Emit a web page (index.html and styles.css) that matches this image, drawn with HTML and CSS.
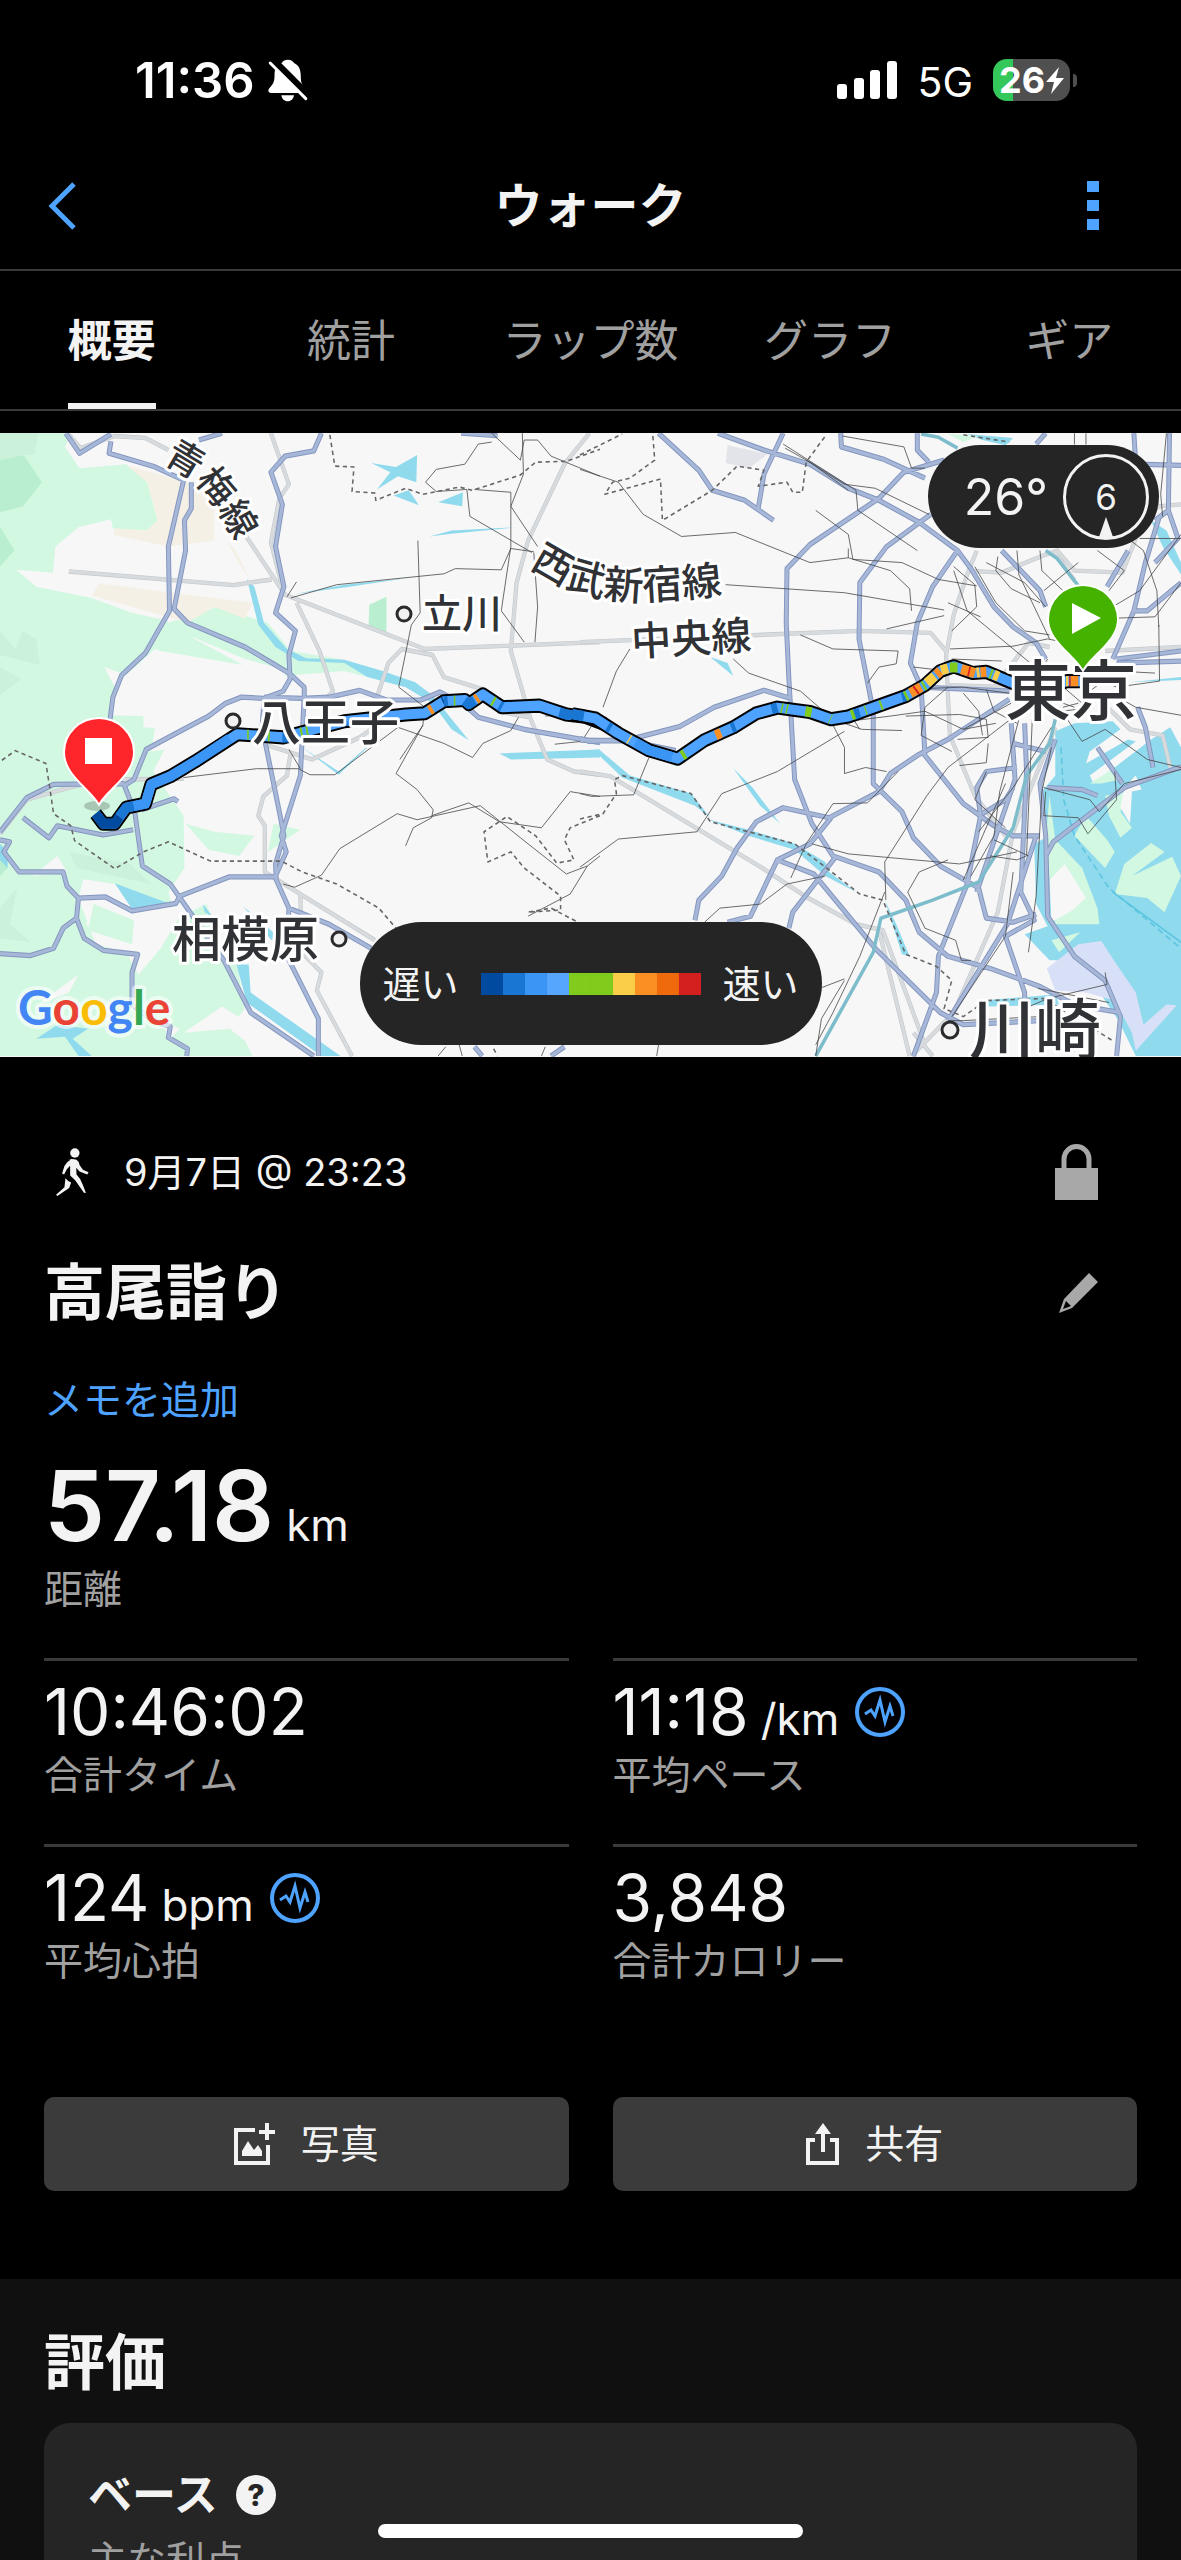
FILE: index.html
```
<!DOCTYPE html>
<html lang="ja">
<head>
  <meta charset="UTF-8">
  <meta name="viewport" content="width=device-width, initial-scale=1">
  <title>ウォーク</title>
  <link rel="stylesheet" href="styles.css">
</head>
<body>

  <div class="status-bar">
    <div class="status-left">
      <span class="clock">11:36</span>
      <svg class="bell" viewBox="443 58 118 128" aria-hidden="true">
        <path fill="#fff" d="M502 60c10 0 16 6 18 10 14 6 20 20 20 38 0 22 4 28 13 37 6 6 5 14-4 14H452c-9 0-11-9-5-15 12-12 15-20 15-40 0-20 8-30 22-35 3-6 9-9 18-9z"/>
        <path fill="#fff" d="M482 166h38c-2 11-9 18-19 18s-17-7-19-18z"/>
        <path stroke="#000" stroke-width="22" d="M456 60l106 106"/>
        <path stroke="#fff" stroke-width="9" stroke-linecap="round" d="M449 70l106 106"/>
      </svg>
    </div>
    <div class="status-right">
      <svg class="signal" viewBox="0 0 60 38" aria-hidden="true">
        <rect x="0" y="23" width="10" height="15" rx="3"/>
        <rect x="17" y="17" width="10" height="21" rx="3"/>
        <rect x="33" y="9" width="10" height="29" rx="3"/>
        <rect x="50" y="0" width="10" height="38" rx="3"/>
      </svg>
      <span class="network">5G</span>
      <span class="battery">26<svg viewBox="0 0 18 27" aria-hidden="true"><path d="M13 0L0 15h8L5 27 18 11h-8z"/></svg></span>
    </div>
  </div>

  <header class="nav-bar">
    <button class="icon-button" type="button" aria-label="戻る">
      <svg width="28" height="48" viewBox="0 0 28 48"><path d="M26 2L4 24l22 22" fill="none" stroke="#4da3ff" stroke-width="5"/></svg>
    </button>
    <h1>ウォーク</h1>
    <button class="icon-button" type="button" aria-label="メニュー">
      <svg width="12" height="50" viewBox="0 0 12 50" fill="#4da3ff"><path d="M0 0h12v11H0zM0 19h12v11H0zM0 38h12v11H0z"/></svg>
    </button>
  </header>

  <nav class="tabs">
    <a class="tab active" href="#summary">概要</a>
    <a class="tab" href="#stats">統計</a>
    <a class="tab" href="#laps">ラップ数</a>
    <a class="tab" href="#graph">グラフ</a>
    <a class="tab" href="#gear">ギア</a>
  </nav>

  <div class="map">
    <svg class="map-canvas" viewBox="0 433 1181 624" preserveAspectRatio="xMidYMid slice" role="img" aria-label="ルートマップ">
      <defs>
        <path id="west-highways" d="M172 8L208 58L290 10M290 28L285 58L400 90L480 125L440 290L443 450L380 555L318 610L295 665L285 740M500 130L500 195L482 225L485 300L455 445L490 480L640 540L755 605L795 640L795 660L785 860L735 1010L748 1050L720 1110M840 8L820 52L745 65L708 105L738 185L720 290L742 390L720 455L772 500L755 560L758 620L740 650L690 668L630 665L590 680L545 712L450 760L382 795L350 870L325 885L352 950L372 1085L445 1130L500 1205L585 1320L655 1450L820 1558M325 880L140 882L70 915L0 1000M60 965L128 1015L150 985L270 1008L348 995M370 945L455 918L465 925M0 1020L25 1025L10 1050L50 1100L165 1100L175 1135L205 1165L275 1162L345 1197L460 1178L470 1160L600 1112L720 1112M205 1165L200 1215L220 1265L270 1295L360 1305L345 1350L345 1430L400 1470L445 1485L440 1512L490 1540L488 1558M200 1215L165 1240L140 1290L80 1308L0 1303M690 668L685 740L730 950L742 1010L720 1080L722 1120L755 1190L860 1230L970 1290M755 1190L750 1310L832 1465L832 1558M690 665L790 668L860 665L940 648L1010 672L1100 672L1150 652L1215 685L1250 715L1370 745L1490 765L1568 778M1205 8L1300 14M520 25L580 8M1240 1535L1260 1558M1440 1558L1475 1535"/>
        <path id="west-roads" d="M180 12L210 45L300 15L380 20L440 50M640 260L745 410L1110 545L1568 528M180 352L610 386L710 372M708 8L755 135L730 170L708 280L740 400M775 430L835 550L870 650L850 672M985 665L1015 580L1050 545L1130 560L1160 615L1260 645M1540 8L1475 85L1380 275L1350 380L1335 550L1385 715L1430 820L1500 850L1568 858M1300 700L1385 715M0 1005L70 920L180 890L270 870L480 868M700 785L815 820L940 765L985 735M760 800L750 860L688 912L675 960L692 985L692 1100L785 1155L980 1270M785 1155L788 1300L840 1350L828 1395L920 1558"/>
        <path id="east-highways" d="M205 8L310 100L345 150L430 175L505 225M360 8L480 50L600 85L700 145L780 175L885 230L985 300L1020 345L1080 440L1130 490L1190 530L1215 570M530 8L480 110L465 195M680 8L682 42L790 72L900 120M880 8L880 50L910 80M950 75L845 105L780 170L600 285L540 345L538 480L545 620L560 870L605 980L660 1060L780 1100L850 1170L885 1250L960 1310L1070 1340L1200 1385L1290 1430L1410 1450M915 210L800 290L730 380L728 520L765 700L765 880L840 950L870 1015L940 1085L1040 1140L1060 1215L1130 1225L1190 1205M985 300L920 390L880 480L862 580L890 640L1120 650M890 640L900 810L1000 930L1080 985L1130 1010L1200 1010M1120 670L960 770L880 810L810 855L780 900L650 965L530 940L460 975L410 1040L370 1110L310 1170L300 1220M655 965L600 1030L515 1070L445 1210L385 1225M515 1070L610 1105L770 1290L940 1450L1000 1480L1300 1465M665 1065L555 1200L545 1240M0 768L25 775L130 770L260 738L350 690L480 648L550 668M0 772L130 774L250 798M1100 300L1200 400L1215 440M1430 300L1375 390M1510 220L1475 330L1445 450L1390 570M1568 380L1480 450L1440 450M1568 550L1400 570M1568 575L1400 580M1445 8L1450 85L1568 88M1538 8L1535 200L1500 225M1535 200L1560 270L1500 330M1215 8L1190 35M1125 730L1135 870L1035 1150M1130 780L1215 800M1160 730L1165 850L1150 1150L1185 1220L1110 1260L1160 1400L1160 1440M1240 770L1200 880L1215 1010L1220 1210L1290 1310L1370 1370L1410 1460L1400 1558M1350 790L1415 880M1220 890L1310 895L1350 910M1215 1060L1235 1025L1420 890L1568 838M1455 690L1475 740L1495 840M1140 840L1060 850L1035 890L1045 960L1010 1130L935 1310L930 1400L870 1558M1130 890L1110 920L1050 955M1190 1010L1115 1230L960 1470"/>
        <path id="east-roads" d="M0 528L730 500L915 505L955 550M1035 300L1010 360L975 460L955 560L965 760L1030 910L1110 1010M1010 350L1100 355L1215 310L1245 300L1290 350L1415 355L1450 270M1235 300L1290 375M960 635L1120 640M1370 550L1568 540M0 850L80 862L475 1090L595 1165L720 1230L790 1245L900 1530M1240 740L1130 1000L1090 1200L975 1450L865 1558M780 1245L860 1558M1365 680L1435 745L1520 760L1540 840M1568 185L1510 190L1480 215M1080 640L1170 530L1225 540M870 1500L920 1558"/>
        <path id="route-west" d="M250 955L270 980L300 980L330 940L380 930L395 882L445 862L510 825L620 757L740 765L900 725L1060 708L1110 705L1160 675L1215 672L1225 682L1262 658L1312 690L1410 686L1480 708L1530 714L1580 732"/>
        <path id="route-east" d="M-20 707L40 718L100 755L180 797L255 818L325 772L400 740L460 705L515 691L600 702L655 720L700 713L850 662L900 635L940 600L975 588L1025 605L1060 602L1130 630L1200 650L1270 625L1305 625"/>
        <path id="label-ome" d="M162 463Q206 478 236 543"/>
        <path id="label-seibu" d="M530 566Q575 600 640 600Q690 598 736 592"/>
      </defs>

      <rect class="land" y="433" width="1181" height="624"/>

      <!-- west half -->
      <g transform="translate(0 430) scale(.38265 .40179)">
        <path class="park" d="M0 8H185L170 42L208 95L330 85L385 130L412 225L385 250L295 245L290 222L205 242L145 290L138 355L42 348L95 390L240 418L345 455L440 475L410 540L330 610L272 590L300 640L290 710L375 712L375 740L405 742L395 800L430 795L400 850L480 960L482 1090L440 1150L450 1185L350 1190L300 1130L218 1118L205 1165L250 1280L330 1300L362 1355L420 1290L470 1210L540 1180L590 1320L620 1330L640 1440L600 1490L640 1520L660 1558H0z"/>
        <path class="park" d="M155 445L440 480L570 440L700 480L760 550L900 572L1045 635L900 600L740 612L755 600L640 570L490 510L635 585L420 550L160 475zM485 980L560 1000L665 1010L625 1060L545 1045zM715 980L785 995L700 1050z"/>
        <path class="forest" d="M0 70L60 60L110 130L60 190L0 205zM0 240L38 300L0 340zM965 435L1010 415V508L963 490zM0 1060L20 1090L0 1110z"/>
        <path class="hill" d="M0 8H100L90 60L50 65L0 75zM0 500L40 545L60 500L95 520L105 585L0 560zM0 590L55 620L0 660zM0 1190L45 1140L25 1230L80 1275L0 1265zM180 1050L340 1080L395 1130L200 1090z"/>
        <path class="sand" d="M330 88L470 125L560 150V275L440 290L298 262V245L385 250L412 225L385 130zM260 382L660 430L640 470L560 440L490 480L240 412zM592 275L615 300L655 375L630 340z"/>
        <path class="land" d="M85 1110L150 1060L175 1100zM250 1180L350 1220L340 1295L260 1270L225 1230zM100 1430L205 1355L180 1400zM480 1500L580 1435L640 1470L600 1490zM425 1470L470 1490L440 1520z"/>
        <path class="park" d="M245 1180L350 1220L345 1280L230 1245z"/>
        <path class="water" d="M970 82L1035 92L1090 62L1088 130L1040 115L985 148L1020 105zM1028 163L1068 150L1095 187zM1145 180L1210 155L1208 190zM1122 265L1180 250L1350 242L1180 258zM645 370L665 390L690 480L750 545L800 568L900 572L1000 600L1085 628L1130 660L1225 772L1180 745L1130 680L1060 640L960 615L900 580L780 575L720 540L675 485zM770 408L900 385L1070 368L900 392zM790 790L885 850L1005 750L885 858zM1305 805L1568 795V815L1335 820zM300 1128L440 1178L345 1192zM530 1180L555 1210L535 1200zM618 1330H650L655 1400L890 1558H840L645 1425zM635 1185L720 1255L710 1270zM95 1515L150 1480L230 1490L190 1515L240 1558H205L170 1510zM0 1030L20 1050V1090L0 1070z"/>
        <use class="road-edge" href="#west-roads"/>
        <use class="road" href="#west-roads"/>
        <use class="highway-edge" href="#west-highways"/>
        <use class="highway" href="#west-highways"/>
        <path class="rail" d="M750 415L775 378M760 418L880 385L1160 358L1190 345L1310 348L1335 295L1395 303M1092 275L1098 455L1075 485L1042 640L1110 690L1105 735L1035 855L1090 895L1132 945L1128 965L1080 990L1060 1035M1285 30L1250 35L1215 85L1140 98L1112 130L1140 153L1220 148L1228 215L1390 305M1285 8L1360 75L1370 25L1405 25L1440 65L1568 115M1365 8L1368 110L1335 190L1405 290M1240 148L1335 155L1335 290L1310 450L1370 528M1395 305L1405 440L1398 528M480 865L670 843H780L810 858H875L1040 740L1160 780L1235 815L1262 780L1335 748L1355 715M755 795L785 843M740 1130L770 1138L840 1108L888 1042L1038 955L1090 970L1255 935L1380 1030L1480 1105L1535 1085L1568 1060M1128 960L1225 928L1305 975L1415 990L1490 900L1568 912M1535 1085L1490 1155L1380 1210M1450 782L1520 775L1545 738M1425 712L1480 708M1105 735L1045 820M1145 1558L1165 1535M1200 1530L1208 1558M1425 1535L1415 1558"/>
        <path class="border" d="M862 12L875 90L925 92L920 153L980 157L982 175L1060 145L1105 160L1200 142L1235 150L1360 112L1400 80L1480 78L1568 48M5 822L40 798L120 830L130 890L140 955L185 985L195 1022L300 1092L375 1050L440 1025L550 1073L735 1073L790 1100L880 1130L990 1190L1035 1240M1568 960L1490 990L1475 1020L1500 1070L1455 1078L1400 1010L1325 962L1265 1000L1275 1075L1335 1050L1370 1090L1465 1160V1195L1380 1200L1440 1190L1510 1225M1290 1540L1300 1558"/>
      </g>

      <!-- east half -->
      <g transform="translate(580 430) scale(.3833 .40179)">
        <path class="water" d="M1240 750L1290 730L1390 725L1410 745L1330 800L1320 830L1430 770L1450 775L1330 860L1340 880L1490 770L1540 740L1568 790V1558H1450L1405 1470L1300 1320L1225 1320L1160 1255L1220 1235L1190 1180L1185 1030L1215 1015L1205 900L1240 860zM1490 225L1530 250L1568 330V360L1520 290zM1010 10L1130 20L1110 38L1050 25zM340 565L385 580L400 612zM400 842L450 890L522 980L470 935zM0 798L50 795L130 860L290 905L340 965L300 935L150 880L110 865L50 810L0 812zM330 968L440 995L560 1030L640 1075L650 1100L720 1150L640 1110L560 1045L440 1010zM795 1170L825 1230L860 1310L840 1305zM1050 1420L1240 1405L1250 1430L1060 1435zM1435 628L1568 615V622z"/>
        <path class="park" d="M1225 910L1240 1020L1310 1090L1350 1190L1355 1230L1240 1230L1220 1080L1215 1020zM1395 1155L1420 1080L1490 1028L1525 1050L1440 1110L1545 1062L1568 1110L1525 1200L1480 1165zM1320 960L1375 1020L1395 1050L1370 1090L1290 1010zM1330 880L1395 840L1410 870L1360 880zM1370 910L1430 900L1410 950L1440 990L1410 1015L1380 960zM1230 1270L1305 1250L1250 1300zM960 10L1040 15L1000 30z"/>
        <path class="land" d="M1225 1120L1265 1080L1320 1165L1285 1195L1230 1225zM1420 890L1450 860L1465 895L1440 900L1435 980L1410 940z"/>
        <path class="port" d="M1218 1340L1300 1280L1360 1272L1400 1330L1450 1400L1470 1480L1530 1430L1557 1432L1450 1545L1440 1500L1395 1420L1320 1400L1240 1395z"/>
        <path class="airfield" d="M385 38L490 60L440 95L380 82z"/>
        <path class="ferry" stroke-dasharray="16 10" d="M1255 790L1262 920L1290 1010L1380 1140L1568 1290"/>
        <path class="ferry" d="M1390 1150L1568 1275"/>
        <use class="road-edge" href="#east-roads"/>
        <use class="road" href="#east-roads"/>
        <use class="highway-edge" href="#east-highways"/>
        <use class="highway" href="#east-highways"/>
        <path class="shinkansen" d="M890 10L935 18L985 45M1215 300L1245 320L1310 400M1240 720L1225 780L1165 860L1130 990L1040 1125L920 1170L785 1215L765 1300L615 1558"/>
        <path class="rail" d="M0 98L100 130L165 210L265 265L405 255L600 330L700 318L810 350L860 395L865 450M380 385L690 405L950 448M615 200L700 260L712 322L840 330L935 372L1035 388M700 295V318M530 35L720 150L725 200L880 300M590 75L690 135L770 145L910 210M685 15L845 42L865 95L900 95M800 495L950 462M575 510L660 545L830 550L825 582L780 590L750 630M965 545L1130 538L1220 520L1350 545M970 570L1100 575M970 500L1035 440L1030 385L975 340M1215 440L1160 380L1060 330M1090 315L1085 350L1125 395L1200 430M1200 300L1205 350L1260 400M1210 400L1300 330M1140 300L1145 360L1225 520M1120 655L1000 640L850 645M1125 680L1000 745L900 700L810 712L700 725M400 570L440 605L575 650L660 720L735 745L840 748M130 545L95 600L60 690M180 815L140 908L30 912L0 905M655 725L690 790V855L745 840L800 850M690 750L515 850L370 905L305 1000L100 1018L0 1088M850 712L990 708L1060 720L1065 765L985 770M605 1030L700 1055L990 1080L1140 1050M1130 715L960 840L905 910L795 1075L798 1170M990 835L1060 828L1065 780M795 1150L730 1310L660 1450L615 1530M960 1070L885 1100L855 1150L900 1240L980 1270L995 1320H1020M640 1110L540 1130L470 1180L365 1190L325 1225M660 930L750 928L830 850M660 930L590 1030L550 1115M1145 720L1095 900L1080 1010L1020 1110M1180 720L1165 1060L1140 1070L1070 1060M1170 1060L1080 1020M1230 790L1205 900L1190 1160L1170 1300M1230 740L1130 890L1040 1000M1215 900L1210 960L1300 965L1325 1005L1400 920L1395 850M1210 890L1330 920L1355 950L1420 880L1568 845M1160 1440L1220 1415L1375 1380L1370 1350M1195 1390L1380 1425M1130 1100L1110 1260L970 1460M690 1370L630 1465L615 1558M630 1388L690 1366M1510 490L1505 400L1470 300L1430 270M1510 485L1512 625M1405 468L1500 465L1568 380M1300 600L1400 640L1512 625M1225 610L1310 680L1375 650L1450 690L1568 710M1290 590L1330 650L1400 600L1500 605M1250 690L1310 775L1370 745L1480 820L1568 840M1530 8L1515 160L1520 215M1290 8V36M1320 8V36M1568 270L1460 270M960 1470L1000 1470L1200 1460M200 1558L205 1530"/>
        <path class="rail" d="M535 45L600 80L700 150M960 430L1045 465M975 350L1010 450L1200 600L1220 570M870 590L960 600M1000 655L1040 700L1050 760M1060 645L1080 700L1140 730M700 700L730 745M960 640L900 690L890 760L970 800M1260 680L1290 690M1260 690L1300 680M1255 700L1300 695M1030 340L1085 430L1160 500L1225 510M1390 440L1460 400L1568 260M1380 400L1420 350L1350 300M1060 850L1030 920L1110 990M1110 880L1000 1120M1085 730L1000 745"/>
        <path class="border" d="M0 62L110 10M190 15L195 75L130 120L85 130L65 160L210 122L215 225L345 150L410 90L480 100L465 140L540 130L555 155H580L590 80L640 15M0 968L60 955L95 905L90 870L110 860L290 905L340 975L560 1030L650 1095L730 1155L790 1170L850 1305L930 1335L970 1370L950 1440L1000 1460L1060 1420L1210 1415L1390 1520M1000 12L1120 30"/>
      </g>

      <g transform="translate(0 430) scale(.38265 .40179)">
        <use class="route-edge" href="#route-west"/>
        <use class="route" href="#route-west"/>
        <path class="route dark" d="M250 955L270 980L300 980L312 962M508 826L513 823M1157 677L1161 675M1222 680L1227 681"/>
        <path class="route mid" d="M312 962L330 940L350 936M1462 703L1480 708L1530 714L1568 727M1160 675L1170 674M1214 674L1225 682L1240 673M738 765H760M900 725L907 723M1305 686L1312 690M560 794L564 792"/>
        <path class="route blue" d="M350 936L380 930L395 882L445 862L510 825L600 768"/>
        <path class="route green" d="M646 758H650M700 762H705M785 753L790 752M800 750L805 749M1186 674H1190M1287 674L1292 677"/>
        <path class="route orange" d="M1122 698L1130 693M1243 671L1250 666"/>
      </g>
      <g transform="translate(580 430) scale(.3833 .40179)">
        <use class="route-edge" href="#route-east"/>
        <use class="route" href="#route-east"/>
        <path class="route mid" d="M-20 707L10 712M72 738L80 743M395 742L405 738M500 695L515 691M715 709L730 704M840 665L850 662"/>
        <path class="route blue" d="M145 778L180 797L240 814"/>
        <path class="route green" d="M266 811L274 806M525 692L529 693M538 694L542 695M588 700L604 703M652 719L654 720M708 710L716 707M744 698L747 697M783 686L788 684M848 663L854 660M895 638L900 635M965 591L985 591M1020 603L1024 604M1070 606L1075 608"/>
        <path class="route orange" d="M354 760L368 754M862 655L890 640M930 609L940 600M995 595L1030 605M1045 603L1060 602M1280 625H1300"/>
        <path class="route yellow" d="M127 769L130 771M905 630L925 613M942 598L960 593M1035 604L1042 603M1080 609L1092 614M1268 625H1274"/>
        <path class="route red" d="M875 649L879 646M1013 601L1017 602M1276 625H1280"/>
      </g>

      <g class="towns">
        <circle cx="404" cy="614" r="7"/>
        <circle cx="233" cy="721" r="7"/>
        <circle cx="339" cy="939" r="7"/>
        <circle cx="950" cy="1030" r="8"/>
      </g>
      <g class="labels">
        <text class="line-small"><textPath href="#label-ome">青梅線</textPath></text>
        <text class="line"><textPath href="#label-seibu">西武新宿線</textPath></text>
        <text class="line" x="632" y="656" transform="rotate(-3 632 656)">中央線</text>
        <text class="town-small" x="422" y="628">立川</text>
        <text class="town" x="252" y="740">八王子</text>
        <text class="town" x="172" y="957">相模原</text>
        <text class="city" x="1005" y="715">東京</text>
        <text class="city" x="969" y="1054">川崎</text>
      </g>

      <ellipse cx="97" cy="806" rx="13" ry="5" fill="#000" opacity=".2"/>
      <path class="pin" fill="#ff262b" d="M99 803C88 786 65 774 65 752a34 33 0 0 1 68 0C133 774 110 786 99 803z"/>
      <rect x="85" y="738" width="27" height="26" fill="#fff"/>
      <path class="pin" fill="#45b200" d="M1083 669C1072 652 1049 640 1049 619a34 33 0 0 1 68 0C1117 640 1094 652 1083 669z"/>
      <path fill="#fff" d="M1072 603v31l29-16z"/>

      <text class="google" x="18" y="1025"><tspan fill="#4285f4">G</tspan><tspan fill="#ea4335">o</tspan><tspan fill="#fbbc05">o</tspan><tspan fill="#4285f4">g</tspan><tspan fill="#34a853">l</tspan><tspan fill="#ea4335">e</tspan></text>
    </svg>

    <div class="weather">
      <span>26°</span>
      <span class="wind">6</span>
    </div>

    <div class="legend">
      <span>遅い</span>
      <span class="scale"><i></i><i></i><i></i><i></i><i></i><i></i><i></i><i></i><i></i><i></i></span>
      <span>速い</span>
    </div>
  </div>

  <main class="summary" id="summary">
    <div class="row when">
      <svg class="walker" viewBox="50 54 98 146" aria-hidden="true">
        <circle cx="106" cy="69" r="14"/>
        <path d="M85 88q14-3 26 1 8 5 9 16l10 14 17 7-4 7-23-9-10-11 1 20q14 14 19 31l9 24-6-1-26-37-15-14V107l-10 10-8 16-6-3 7-22q7-14 19-20z"/>
        <path d="M78 144q7 9 17 13l-6 16-35 24-4-4 25-22z"/>
      </svg>
      <span class="date">9月7日 @ 23:23</span>
      <button class="icon-button" type="button" aria-label="公開設定">
        <svg width="43" height="56" viewBox="0 0 43 56"><path d="M9 26V15a12 12 0 0 1 25 0v11" fill="none" stroke="#a8a8a8" stroke-width="5"/><path fill="#a8a8a8" d="M0 24h43v32H0z"/></svg>
      </button>
    </div>
    <div class="row name">
      <h2>高尾詣り</h2>
      <button class="icon-button" type="button" aria-label="名前を編集">
        <svg width="40" height="40" viewBox="0 0 40 40" fill="#a8a8a8"><path d="M31 0l9 9-26 26-13 5 5-14zM8 28l-3 8 8-3z" fill-rule="evenodd"/></svg>
      </button>
    </div>
    <a class="memo" href="#memo">メモを追加</a>

    <dl class="stat distance">
      <dd>57.18 <span class="unit">km</span></dd>
      <dt>距離</dt>
    </dl>
    <div class="stat-grid">
      <dl class="stat">
        <dd>10:46:02</dd>
        <dt>合計タイム</dt>
      </dl>
      <dl class="stat">
        <dd>11:18 <span class="unit">/km</span>
          <svg class="pulse" viewBox="0 0 50 50" aria-hidden="true"><circle cx="25" cy="25" r="23"/><path d="M10 27l6-4 4 6 5-16 5 22 5-16 3 10"/></svg></dd>
        <dt>平均ペース</dt>
      </dl>
      <dl class="stat">
        <dd>124 <span class="unit">bpm</span>
          <svg class="pulse" viewBox="0 0 50 50" aria-hidden="true"><circle cx="25" cy="25" r="23"/><path d="M10 27l6-4 4 6 5-16 5 22 5-16 3 10"/></svg></dd>
        <dt>平均心拍</dt>
      </dl>
      <dl class="stat">
        <dd>3,848</dd>
        <dt>合計カロリー</dt>
      </dl>
    </div>

    <div class="actions">
      <button type="button">
        <svg width="41" height="42" viewBox="0 0 41 42"><path d="M21 7H2v33h32V22M33 0v17M25 9h16" fill="none" stroke="#f2f3f2" stroke-width="4"/><path fill="#f2f3f2" d="M8 33V28l6-10 6 9 4-5 4 6v5z"/></svg>
        写真
      </button>
      <button type="button">
        <svg width="33" height="42" viewBox="0 0 33 42"><path d="M9 17H2v23h29V17h-7M17 6v23" fill="none" stroke="#f2f3f2" stroke-width="4"/><path fill="#f2f3f2" d="M17 0l8 11H9z"/></svg>
        共有
      </button>
    </div>
  </main>

  <section class="evaluation">
    <h2>評価</h2>
    <div class="card">
      <h3>ベース <button class="help" type="button" aria-label="ヘルプ">?</button></h3>
      <p>主な利点</p>
    </div>
  </section>

  <div class="home-indicator"></div>

</body>
</html>
```
FILE: styles.css
```
* {
  box-sizing: border-box;
}

body {
  margin: 0;
  height: 100vh;
  overflow: hidden;
  background: #000;
  color: #f2f3f2;
  font-family: Inter, "Noto Sans CJK JP", sans-serif;
}

h1, h2, h3, p, dl, dd {
  margin: 0;
}

a {
  text-decoration: none;
}

button {
  border: none;
  padding: 0;
  background: none;
  color: inherit;
  font-family: inherit;
}

svg {
  display: block;
}

/* status bar */
.status-bar {
  display: flex;
  justify-content: space-between;
  height: 143px;
  padding: 46px 111px 0 135px;
  color: #fff;
}

.status-left, .status-right {
  display: flex;
  align-items: center;
  height: 68px;
}

.clock {
  font-size: 49px;
  font-weight: 600;
}

.bell {
  width: 40px;
  height: 43px;
  margin-left: 13px;
}

.signal {
  width: 60px;
  height: 38px;
  fill: #fff;
}

.network {
  margin: 4px 20px 0;
  font-size: 41px;
}

.battery {
  position: relative;
  display: flex;
  align-items: center;
  justify-content: center;
  gap: 1px;
  width: 77px;
  height: 42px;
  border-radius: 14px;
  background: linear-gradient(90deg, #34c759 26%, #4f4f4f 26%);
  font-size: 36px;
  font-weight: 700;
}

.battery svg {
  width: 18px;
  height: 27px;
  fill: #fff;
}

.battery::after {
  content: "";
  position: absolute;
  left: 80px;
  width: 4px;
  height: 13px;
  border-radius: 0 4px 4px 0;
  background: #4f4f4f;
}

/* navigation */
.nav-bar {
  display: flex;
  align-items: center;
  justify-content: space-between;
  height: 128px;
  padding: 0 82px 0 48px;
  border-bottom: 2px solid #3a3a3a;
}

.nav-bar h1 {
  font-size: 48px;
  line-height: 64px;
  margin-left: 18px;
}

.tabs {
  display: grid;
  grid-template-columns: repeat(5, 1fr);
  justify-items: center;
  height: 140px;
  margin: 0 -8px 22px;
  border-bottom: 2px solid #3a3a3a;
}

.tab {
  padding-top: 2px;
  color: #a0a0a0;
  font-size: 44px;
  line-height: 136px;
}

.tab.active {
  color: #f2f3f2;
  font-weight: 700;
  box-shadow: inset 0 -6px #f2f3f2;
}

/* map */
.map {
  position: relative;
}

.map-canvas {
  width: 100%;
  height: 624px;
}

.land { fill: #f7f7f7; }
.park { fill: #d3f8e2; }
.forest { fill: #b9efd0; }
.hill { fill: #cbf1da; }
.sand { fill: #f5f0e6; }
.water { fill: #90daee; }
.port { fill: #d8e0f7; }
.airfield { fill: #e2e4e9; }

.road-edge, .road, .highway-edge, .highway,
.rail, .border, .ferry, .shinkansen,
.route-edge, .route {
  fill: none;
  stroke-linejoin: round;
}

.road-edge { stroke: #c3c7cb; stroke-width: 11; }
.road { stroke: #d8dbde; stroke-width: 8; }
.highway-edge { stroke: #8496bf; stroke-width: 13; }
.highway { stroke: #a6b7d8; stroke-width: 8; }
.rail { stroke: #444; stroke-width: 2; }
.border { stroke: #666; stroke-width: 4; stroke-dasharray: 11 9; }
.ferry { stroke: #5cc5e0; stroke-width: 4; }
.shinkansen { stroke: #7dbccb; stroke-width: 9; }
.route-edge { stroke: #000; stroke-width: 35; }

.route { stroke: #4da3ff; stroke-width: 25; }
.route.dark { stroke: #004b9f; }
.route.mid { stroke: #1976d2; }
.route.blue { stroke: #3a95f5; }
.route.green { stroke: #80cb1b; }
.route.yellow { stroke: #fbce49; }
.route.orange { stroke: #fb8f23; }
.route.red { stroke: #d52020; }

.towns {
  fill: #f1f1f1;
  stroke: #2b2b2e;
  stroke-width: 3;
}

.labels {
  fill: #303236;
  font-family: "Noto Sans CJK JP", sans-serif;
  font-weight: 500;
  stroke: #fff;
  stroke-width: 6;
  stroke-linejoin: round;
  paint-order: stroke;
}

.line-small { font-size: 37px; }
.line { font-size: 40px; }
.town-small { font-size: 40px; }
.town { font-size: 49px; }
.city { font-size: 66px; }

.pin {
  stroke: #fff;
  stroke-width: 4;
  paint-order: stroke;
}

.google {
  font-family: Lato, sans-serif;
  font-size: 48px;
  font-weight: 700;
  stroke: rgba(255, 255, 255, 0.6);
  stroke-width: 8;
  stroke-linejoin: round;
  paint-order: stroke;
}

.weather, .legend {
  position: absolute;
  display: flex;
  align-items: center;
  background: #252525;
}

.weather {
  top: 12px;
  right: 22px;
  gap: 15px;
  height: 103px;
  padding: 0 10px 0 36px;
  border-radius: 52px;
  font-size: 50px;
}

.wind {
  position: relative;
  width: 86px;
  height: 86px;
  border: 3px solid #f2f3f2;
  border-radius: 50%;
  font-size: 35px;
  line-height: 80px;
  text-align: center;
}

.wind::after {
  content: "";
  position: absolute;
  left: 33px;
  bottom: 0;
  border: 7px solid transparent;
  border-top: 0;
  border-bottom: 20px solid #f2f3f2;
}

.legend {
  left: 50%;
  bottom: 12px;
  gap: 22px;
  height: 123px;
  padding: 0 23px;
  border-radius: 62px;
  font-size: 38px;
  line-height: 48px;
  white-space: nowrap;
  transform: translateX(-50%);
}

.scale {
  display: flex;
}

.scale i {
  width: 22px;
  height: 22px;
  background: #80cb1b;
}

.scale i:nth-child(1) { background: #004b9f; }
.scale i:nth-child(2) { background: #1976d2; }
.scale i:nth-child(3) { background: #3a95f5; }
.scale i:nth-child(4) { background: #55a6fc; }
.scale i:nth-child(7) { background: #fbce49; }
.scale i:nth-child(8) { background: #fb8f23; }
.scale i:nth-child(9) { background: #ee6a0d; }
.scale i:nth-child(10) { background: #d52020; }

/* summary */
.summary {
  padding: 87px 44px 88px;
}

.row {
  display: flex;
  align-items: center;
}

.row .icon-button {
  margin-left: auto;
  margin-right: 39px;
}

.when {
  height: 56px;
  padding-left: 12px;
}

.walker {
  width: 33px;
  height: 49px;
  fill: #f2f3f2;
}

.date {
  margin-left: 35px;
  font-size: 38px;
  line-height: 48px;
}

.name {
  margin: 57px 0 47px;
}

h2 {
  font-size: 61px;
  line-height: 72px;
}

.memo {
  display: block;
  color: #4da3ff;
  font-size: 39px;
  line-height: 48px;
}

.stat {
  display: flex;
  flex-direction: column;
}

.stat dd {
  display: flex;
  align-items: baseline;
  gap: 12px;
  height: 64px;
  font-size: 64px;
  line-height: 64px;
}

.stat dt {
  margin-top: 7px;
  color: #a0a0a0;
  font-size: 39px;
  line-height: 48px;
}

.stat .unit {
  font-size: 44px;
  line-height: 44px;
}

.distance {
  margin: 34px 0 45px;
}

.distance dd {
  height: 96px;
  font-size: 97px;
  font-weight: 600;
  line-height: 96px;
}

.distance dt {
  margin-top: 11px;
}

.distance .unit {
  font-weight: 400;
}

.stat-grid {
  display: grid;
  grid-template-columns: 1fr 1fr;
  column-gap: 44px;
}

.stat-grid .stat {
  padding: 19px 0 45px;
  border-top: 3px solid #3a3a3a;
}

.pulse {
  align-self: center;
  width: 50px;
  height: 50px;
  margin-left: 4px;
  fill: none;
  stroke: #4da3ff;
  stroke-width: 4;
}

.pulse path {
  stroke-width: 3;
}

.actions {
  display: grid;
  grid-template-columns: 1fr 1fr;
  gap: 44px;
  margin-top: 67px;
}

.actions button {
  display: flex;
  align-items: center;
  justify-content: center;
  gap: 26px;
  height: 94px;
  border-radius: 10px;
  background: #3b3b3b;
  font-size: 39px;
  line-height: 48px;
}

/* evaluation */
.evaluation {
  padding: 48px 44px;
  background: #101010;
}

.card {
  margin-top: 24px;
  padding: 44px;
  border-radius: 26px;
  background: #252525;
}

.card h3 {
  display: flex;
  align-items: center;
  gap: 18px;
  font-size: 44px;
  line-height: 56px;
}

.help {
  width: 40px;
  height: 40px;
  border-radius: 50%;
  background: #f2f3f2;
  color: #252525;
  font-size: 30px;
  font-weight: 800;
  line-height: 40px;
}

.card p {
  margin-top: 13px;
  color: #a0a0a0;
  font-size: 39px;
  line-height: 48px;
}

.home-indicator {
  position: fixed;
  bottom: 22px;
  left: 32%;
  right: 32%;
  height: 14px;
  border-radius: 7px;
  background: #fff;
}
```
